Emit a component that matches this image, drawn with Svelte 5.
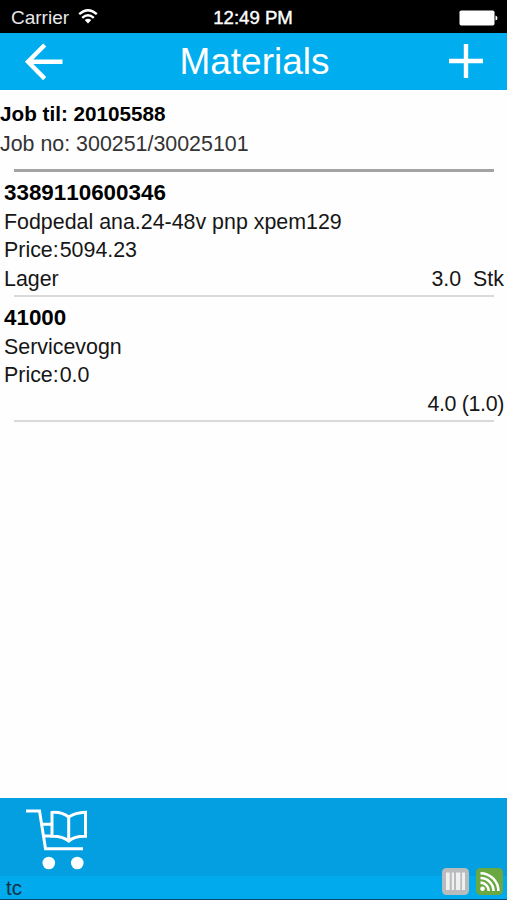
<script lang="ts">
  type Material = {
    id: string;
    name: string;
    price: string;
    store: string;
    amount: string;
  };

  const job = { til: "20105588", no: "300251/30025101" };

  const materials: Material[] = [
    {
      id: "3389110600346",
      name: "Fodpedal ana.24-48v pnp xpem129",
      price: "5094.23",
      store: "Lager",
      amount: "3.0  Stk",
    },
    { id: "41000", name: "Servicevogn", price: "0.0", store: "", amount: "4.0 (1.0)" },
  ];
</script>

<div class="screen">
  <div class="status">
    <div class="carrier">
      <span>Carrier</span>
      <svg class="wifi" viewBox="0 0 20 16" aria-hidden="true">
        <path d="M1.2 5.2 Q10 -2.6 18.8 5.2" />
        <path d="M4.2 8.8 Q10 3.8 15.8 8.8" />
        <path class="dot" d="M6.7 11.1 Q10 8.5 13.3 11.1 L10 14.6 Z" />
      </svg>
    </div>
    <span class="time">12:49 PM</span>
    <svg class="battery" viewBox="0 0 39 16" aria-hidden="true">
      <rect x="0.5" y="0.5" width="35" height="15" rx="1.8" />
      <path d="M36.5 5.5 Q38.5 6 38.5 8 Q38.5 10 36.5 10.5 Z" />
    </svg>
  </div>

  <header>
    <button aria-label="Back">
      <svg class="back" viewBox="0 0 40 38" aria-hidden="true">
        <path d="M21.7 2 L5 18.8 L21.7 35.6 M5 18.8 H39.5" />
      </svg>
    </button>
    <h1>Materials</h1>
    <button aria-label="Add material">
      <svg class="add" viewBox="0 0 34 34" aria-hidden="true">
        <path d="M17 0 V34 M0 17 H34" />
      </svg>
    </button>
  </header>

  <main>
    <section class="job">
      <p class="til">Job til: {job.til}</p>
      <p class="no">Job no: {job.no}</p>
    </section>

    <ul>
      {#each materials as m (m.id)}
        <li>
          <p class="id">{m.id}</p>
          <p>{m.name}</p>
          <p class="price"><span>Price:</span><span>{m.price}</span></p>
          <p class="stock"><span>{m.store}</span><span class:tight={!m.store}>{m.amount}</span></p>
        </li>
      {/each}
    </ul>
  </main>

  <footer>
    <button class="cart" aria-label="Catalogue">
      <svg viewBox="0 0 62 62" aria-hidden="true">
        <g class="lines">
          <path d="M-1 3 H12.5 L18.5 40.7 H56" />
          <path d="M15 16.3 H25 M17 28 H25" />
          <path d="M25 4.5 Q34 3.5 41.7 9 Q48 4.5 58.5 4.2 V28.3 Q48 28 41.7 33 Q35 28 25 28.3 Z M41.7 9 V33" />
        </g>
        <circle cx="21.8" cy="55" r="6.3" />
        <circle cx="50.3" cy="55" r="6.3" />
      </svg>
    </button>
    <div class="info">
      <span>tc</span>
      <div class="badges">
        <svg viewBox="0 0 27 27" aria-hidden="true">
          <rect class="grey" width="27" height="27" rx="4.5" />
          <path class="bars" d="M4 4.5 H7.7 V22 H4 Z M9.8 4.5 H12 V22 H9.8 Z M14 4.5 H18.3 V22 H14 Z M20 4.5 H23 V22 H20 Z" />
        </svg>
        <svg viewBox="0 0 27 27" aria-hidden="true">
          <rect class="green" width="27" height="27" rx="4.5" />
          <circle cx="6.5" cy="20.8" r="2.3" />
          <path class="feed" d="M4.5 14.6 A8.5 8.5 0 0 1 12.8 23 M4.5 10 A13 13 0 0 1 17.5 23 M4.5 5.2 A18 18 0 0 1 22.4 23" />
        </svg>
      </div>
    </div>
  </footer>
</div>

<style>
  :global(body) {
    margin: 0;
    background: #fff;
  }
  .screen {
    display: flex;
    flex-direction: column;
    width: 100%;
    height: 100vh;
    overflow: hidden;
    background: #fefefe;
    color: #161616;
    font-family: "Liberation Sans", Arial, sans-serif;
    font-size: 21.4px;
    line-height: 28.5px;
    font-kerning: none;
  }
  p, ul, h1 {
    margin: 0;
    padding: 0;
  }
  button {
    display: flex;
    padding: 0;
    border: 0;
    background: none;
    cursor: pointer;
  }
  svg {
    display: block;
    flex: none;
  }

  .status {
    display: grid;
    grid-template-columns: 1fr auto 1fr;
    align-items: center;
    height: 33px;
    padding: 3px 9px 0 11px;
    box-sizing: border-box;
    background: #000;
    color: #e8e8e8;
    font-size: 19px;
    line-height: 30px;
  }
  .carrier {
    display: flex;
    align-items: center;
    gap: 9px;
  }
  .wifi {
    width: 20px;
    height: 16px;
    margin-top: -3px;
    fill: none;
    stroke: #fff;
    stroke-width: 2.4;
  }
  .wifi .dot {
    fill: #fff;
    stroke: none;
  }
  .time {
    margin-right: 3px;
    color: #fff;
    font-size: 18.6px;
    -webkit-text-stroke: 0.4px #fff;
  }
  .battery {
    width: 39px;
    height: 16px;
    margin-top: -1px;
    justify-self: end;
    fill: #fff;
  }

  header {
    display: flex;
    align-items: center;
    justify-content: space-between;
    height: 57px;
    padding: 0 24px 0 23px;
    background: #00aeef;
  }
  header svg {
    fill: none;
    stroke: #fff;
    stroke-width: 4.4;
  }
  .back {
    width: 40px;
    height: 38px;
  }
  .add {
    width: 34px;
    height: 34px;
    margin-top: -1px;
  }
  h1 {
    margin-right: 3px;
    color: #fff;
    font-size: 37px;
    font-weight: 400;
    line-height: 57px;
  }

  main {
    flex: 1;
  }
  .job {
    padding-top: 9px;
    line-height: 30px;
  }
  .job::after {
    content: "";
    display: block;
    height: 3px;
    margin: 10px 13px 0 14px;
    background: #a3a3a3;
  }
  .til {
    color: #000;
    font-size: 20.7px;
    font-weight: 700;
  }
  .no {
    color: #333;
  }

  ul {
    padding-top: 7px;
    list-style: none;
  }
  li {
    padding: 0 3px 0 4px;
    margin-bottom: 7px;
  }
  li::after {
    content: "";
    display: block;
    height: 2px;
    margin: 2px 10px 0;
    background: #d9d9d9;
  }
  .id {
    color: #000;
    font-size: 22.4px;
    font-weight: 700;
  }
  .price {
    display: flex;
    gap: 1px;
  }
  .stock {
    display: flex;
    justify-content: space-between;
    white-space: pre;
  }
  .tight {
    letter-spacing: -0.35px;
  }

  footer {
    height: 102px;
    box-sizing: border-box;
    border-bottom: 1px solid #064b6b;
    background: #039fe1;
  }
  .cart {
    height: 78px;
    padding: 10px 0 0 27px;
    box-sizing: border-box;
  }
  .cart svg {
    width: 62px;
    height: 62px;
    overflow: visible;
    fill: #fff;
  }
  .lines {
    fill: none;
    stroke: #fff;
    stroke-width: 3;
  }
  .info {
    display: flex;
    align-items: flex-end;
    justify-content: space-between;
    height: 23px;
    padding: 0 4px 0 6px;
    background: #00aaed;
    color: #123244;
    font-size: 20.5px;
    line-height: 23px;
  }
  .badges {
    display: flex;
    gap: 7px;
    padding-bottom: 4px;
  }
  .badges svg {
    width: 27px;
    height: 27px;
    fill: #fff;
  }
  .badges .grey {
    fill: #b9bbbc;
  }
  .badges .bars {
    fill: #f0f0f0;
  }
  .badges .green {
    fill: #6aa842;
  }
  .badges .feed {
    fill: none;
    stroke: #fff;
    stroke-width: 2.6;
  }
</style>
